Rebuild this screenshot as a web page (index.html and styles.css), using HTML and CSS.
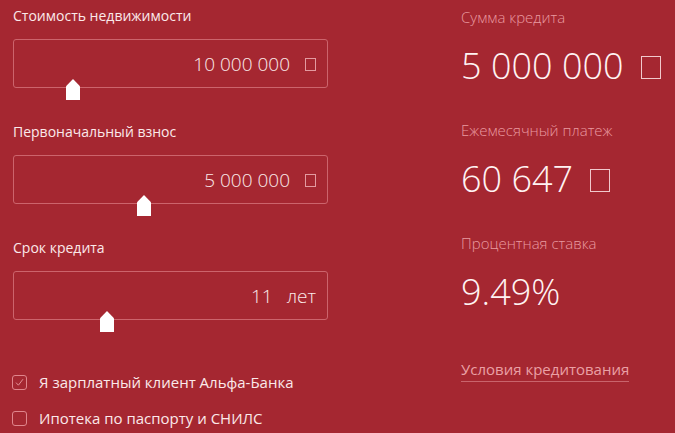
FILE: index.html
```html
<!DOCTYPE html>
<html lang="ru">
<head>
<meta charset="utf-8">
<title>Ипотечный калькулятор</title>
<link rel="stylesheet" href="styles.css">
</head>
<body>
<div class="calc">
  <div class="inputs">
    <div class="field">
      <div class="label">Стоимость недвижимости</div>
      <div class="box">
        <span class="value">10 000 000</span><span class="cur"></span>
        <span class="thumb" style="left:52px"></span>
      </div>
    </div>
    <div class="field">
      <div class="label">Первоначальный взнос</div>
      <div class="box">
        <span class="value">5 000 000</span><span class="cur"></span>
        <span class="thumb" style="left:123px"></span>
      </div>
    </div>
    <div class="field">
      <div class="label">Срок кредита</div>
      <div class="box">
        <span class="value">11</span><span class="unit">лет</span>
        <span class="thumb" style="left:86px"></span>
      </div>
    </div>
    <div class="checks">
      <label class="check"><span class="cb checked"><svg viewBox="0 0 15 15" width="15" height="15"><path d="M4 7.6 L6.4 10.2 L11 4.2" fill="none" stroke="#e48f96" stroke-width="1"/></svg></span><span class="ctext">Я зарплатный клиент Альфа-Банка</span></label>
      <label class="check"><span class="cb"></span><span class="ctext">Ипотека по паспорту и СНИЛС</span></label>
    </div>
  </div>
  <div class="results">
    <div class="res">
      <div class="rlabel">Сумма кредита</div>
      <div class="rvalue">5 000 000<span class="rcur"></span></div>
    </div>
    <div class="res">
      <div class="rlabel">Ежемесячный платеж</div>
      <div class="rvalue">60 647<span class="rcur"></span></div>
    </div>
    <div class="res">
      <div class="rlabel">Процентная ставка</div>
      <div class="rvalue">9.49%</div>
    </div>
    <div class="terms"><a class="link" href="#">Условия кредитования</a></div>
  </div>
</div>
</body>
</html>
```

FILE: styles.css
```css
html, body {
  margin: 0;
  padding: 0;
  background: #a52731;
}
body {
  width: 675px;
  height: 433px;
  overflow: hidden;
  font-family: "Open Sans", "Noto Sans", sans-serif;
}
.calc {
  display: flex;
  padding: 6px 0 0 13px;
  gap: 133px;
}
.inputs {
  width: 315px;
  display: flex;
  flex-direction: column;
}
.field {
  display: flex;
  flex-direction: column;
  margin-bottom: 34px;
}
.label {
  font-size: 14px;
  line-height: 20px;
  color: #fbe9ea;
  margin-bottom: 13px;
}
.box {
  position: relative;
  height: 47px;
  border: 1px solid #cc646c;
  border-radius: 3px;
  display: flex;
  align-items: center;
  justify-content: flex-end;
  padding-right: 11px;
}
.value {
  font-size: 19px;
  font-weight: 300;
  color: #fbeaea;
}
.cur {
  width: 9px;
  height: 11px;
  border: 1px solid #e39aa0;
  margin-left: 15px;
  margin-top: 1px;
}
.unit {
  font-size: 19px;
  font-weight: 300;
  color: #fbeaea;
  margin-left: 14px;
}
.thumb {
  position: absolute;
  bottom: -13px;
  width: 14px;
  height: 21px;
  background: #ffffff;
  clip-path: polygon(50% 0, 100% 35%, 100% 100%, 0 100%, 0 35%);
}
.checks {
  margin-top: 18px;
  display: flex;
  flex-direction: column;
  gap: 16px;
}
.check {
  display: flex;
  align-items: center;
  gap: 12px;
  font-size: 15px;
  line-height: 20px;
  color: #fbe9ea;
}
.cb {
  width: 13px;
  height: 13px;
  border: 1px solid #e0858c;
  border-radius: 3px;
  display: flex;
  align-items: center;
  justify-content: center;
  margin-left: -1px;
}
.cb svg {
  display: block;
  flex: none;
}
.results {
  display: flex;
  flex-direction: column;
  padding-top: 1px;
}
.res {
  display: flex;
  flex-direction: column;
  margin-bottom: 32px;
}
.rlabel {
  font-size: 15px;
  font-weight: 300;
  line-height: 20px;
  color: #e99aa0;
  margin-bottom: 17px;
}
.rvalue {
  font-size: 36px;
  font-weight: 300;
  line-height: 44px;
  color: #fff3f3;
  display: flex;
  align-items: center;
}
.rcur {
  width: 18px;
  height: 21px;
  border: 1.5px solid #f1c9cc;
  margin-left: 17px;
  margin-top: 2px;
}
.terms {
  margin-top: 12px;
}
.link {
  font-size: 15px;
  line-height: 20px;
  color: #eaa0a5;
  text-decoration: none;
  border-bottom: 1px solid #c9646c;
  padding-bottom: 2px;
}
```
